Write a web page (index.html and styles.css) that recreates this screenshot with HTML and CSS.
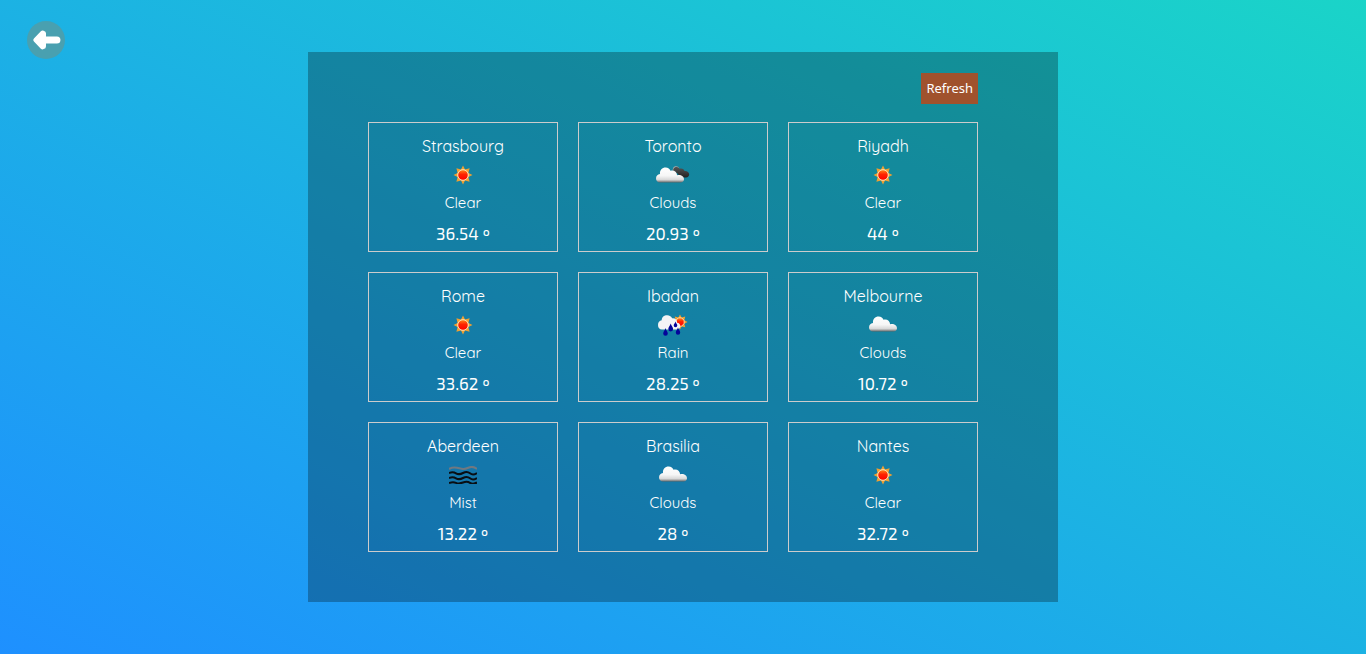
FILE: index.html
```
<!DOCTYPE html>
<html lang="en">
<head>
<meta charset="utf-8">
<meta name="viewport" content="width=device-width, initial-scale=1">
<title>World weather</title>
<link rel="stylesheet" href="styles.css">
</head>
<body>
<svg class="defs" aria-hidden="true">
  <defs>
    <linearGradient id="cloud-fill" x1="0" y1="0" x2="0" y2="1">
      <stop offset="0" stop-color="#fff"/><stop offset=".55" stop-color="#f6f6f6"/><stop offset=".82" stop-color="#d8d8d8"/><stop offset="1" stop-color="#666"/>
    </linearGradient>
    <linearGradient id="dark-fill" x1="0" y1="0" x2="0" y2="1">
      <stop offset="0" stop-color="#555"/><stop offset="1" stop-color="#222"/>
    </linearGradient>
    <linearGradient id="sun-fill" x1="0" y1="0" x2="0" y2="1">
      <stop offset="0" stop-color="#ff8a1c"/><stop offset=".45" stop-color="#f20"/><stop offset="1" stop-color="#f00"/>
    </linearGradient>
    <symbol id="sun" viewBox="0 0 20 20">
      <path fill="#f0a030" d="M10 .5l2 4 4.6-1.300-1.200 4.700 4.100 2.100-4.100 2.100 1.200 4.600-4.600-1.200-2 4-2-4-4.600 1.200 1.200-4.600L.5 10l4.100-2.100-1.200-4.700L8 4.500z"/>
      <circle cx="10" cy="10" r="5.300" fill="url(#sun-fill)" stroke="#ffe9bd" stroke-width="1"/>
    </symbol>
    <symbol id="cloud" viewBox="0 0 28 16">
      <path fill="url(#cloud-fill)" d="M4 15.500C1.500 15.500 0 13.800 0 11.500 0 9 1.500 7.300 4 7 3.600 3 6.200.5 9.600.5c2.600 0 4.200 1.300 4.900 3.300 3.500-1 6.300 1.200 6.600 4.400 3.600-.9 6.900 1 6.900 4 0 1.900-1.300 3.300-3.500 3.300z"/>
    </symbol>
  </defs>
  <symbol id="clouds" viewBox="0 0 34 17">
    <path fill="#aaa" d="M17 6C16 2 18 .3 20 .3c1.700 0 2.600.8 3 1.700l-1 4z"/>
    <path fill="url(#dark-fill)" d="M17.500 6C16.500 2.500 18.600 1 20.600 1c1.400 0 2.400.8 2.900 1.800 2.300-1 4.600.1 5 2.300 2.400-.3 4.700 1.100 4.700 3.200 0 2-1.300 3.200-3.200 3.200h-5L21 7z"/>
    <use href="#cloud" x="0" y="1" width="28" height="16"/>
  </symbol>
  <symbol id="rain" viewBox="0 0 30 22">
    <use href="#sun" x="14" y="0" width="16" height="16"/>
    <path fill="#f4f4f6" d="M4 15.500c-2.500 0-4-1.700-4-4.500s1.500-4.400 3.700-4.700C3.700 3 6 1.200 9.200 1.200c2.400 0 4.200 1.300 4.900 3.100 3.200-.4 5.200 1.800 5 4.400 2 .2 3.100 1.400 3.100 3.400 0 2.200-1.400 3.400-3.200 3.400z"/>
    <path fill="#04049a" d="M12.700 9.500c-.8 2.700-2.400 3.800-2.400 5.500a2.400 2.400 0 0 0 4.800 0c0-1.700-1.600-2.800-2.400-5.500zM7.500 14c-.7 2.500-2.300 3.700-2.300 5.400a2.300 2.300 0 0 0 4.600 0c0-1.700-1.600-2.900-2.300-5.400zM20 13.500c-.7 2.300-2.200 3.400-2.200 5a2.200 2.200 0 0 0 4.400 0c0-1.600-1.500-2.700-2.200-5zM17.500 7.500c-.5 2-1.800 2.700-1.800 4a1.800 1.800 0 0 0 3.600 0c0-1.300-1.300-2-1.800-4z"/>
  </symbol>
  <symbol id="mist" viewBox="0 0 28 18">
    <path fill="none" stroke="#707880" stroke-width="2" d="M0 3Q4 .8 8 1.800T14 3T20 1.500T28 3"/>
    <path fill="none" stroke="#090d12" stroke-width="2" d="M0 7q4-1.500 7 .3t7-.3 7 .3 7-.3M0 12q4-1.500 7 .3t7-.3 7 .3 7-.3M0 17q4-1.500 7-.2t7-.3 7 .3 7-.3"/>
  </symbol>
</svg>

<header class="topbar">
  <button class="back" type="button" aria-label="Back">
    <svg viewBox="0 0 40 40" aria-hidden="true"><path d="M7.300 18.300L14.600 10.800Q16 9.500 17.500 10.300Q20 11 20 13V16.200H31.500A3.700 3.700 0 0 1 31.500 23.600H20V26.500Q20 29 17.500 29.600Q16 30.300 14.600 29.200L7.300 21.700Q5.700 20 7.300 18.300z"/></svg>
  </button>
</header>

<main class="panel">
  <div class="actions"><button class="refresh" type="button">Refresh</button></div>
  <section class="grid">
    <article class="card"><h2 class="city">Strasbourg</h2><div class="icon"><svg class="sun"><use href="#sun"/></svg></div><p class="state">Clear</p><p class="temp">36.54 º</p></article>
    <article class="card"><h2 class="city">Toronto</h2><div class="icon"><svg class="clouds"><use href="#clouds"/></svg></div><p class="state">Clouds</p><p class="temp">20.93 º</p></article>
    <article class="card"><h2 class="city">Riyadh</h2><div class="icon"><svg class="sun"><use href="#sun"/></svg></div><p class="state">Clear</p><p class="temp">44 º</p></article>
    <article class="card"><h2 class="city">Rome</h2><div class="icon"><svg class="sun"><use href="#sun"/></svg></div><p class="state">Clear</p><p class="temp">33.62 º</p></article>
    <article class="card"><h2 class="city">Ibadan</h2><div class="icon"><svg class="rain"><use href="#rain"/></svg></div><p class="state">Rain</p><p class="temp">28.25 º</p></article>
    <article class="card"><h2 class="city">Melbourne</h2><div class="icon"><svg class="cloud"><use href="#cloud"/></svg></div><p class="state">Clouds</p><p class="temp">10.72 º</p></article>
    <article class="card"><h2 class="city">Aberdeen</h2><div class="icon"><svg class="mist"><use href="#mist"/></svg></div><p class="state">Mist</p><p class="temp">13.22 º</p></article>
    <article class="card"><h2 class="city">Brasilia</h2><div class="icon"><svg class="cloud"><use href="#cloud"/></svg></div><p class="state">Clouds</p><p class="temp">28 º</p></article>
    <article class="card"><h2 class="city">Nantes</h2><div class="icon"><svg class="sun"><use href="#sun"/></svg></div><p class="state">Clear</p><p class="temp">32.72 º</p></article>
  </section>
</main>
</body>
</html>
```

FILE: styles.css
```
* { box-sizing: border-box; }

body {
  margin: 0;
  min-height: 100vh;
  display: grid;
  align-items: center;
  justify-items: center;
  background: linear-gradient(to top right, #1e90ff, #1ad4c8);
  color: #fff;
  font-family: Quicksand, Lato, sans-serif;
}

.defs { position: absolute; width: 0; height: 0; }

.topbar { position: absolute; top: 21px; left: 27px; }

.back {
  display: block;
  width: 38px;
  height: 38px;
  padding: 0;
  border: 0;
  border-radius: 50%;
  background: #49a0b0;
  cursor: pointer;
}

.back svg { display: block; width: 100%; fill: #fff; }

.panel {
  width: 100%;
  max-width: 750px;
  padding: 21px 80px 50px 60px;
  background: rgba(0, 0, 0, 0.28);
}

.actions { display: flex; justify-content: flex-end; margin-bottom: 18px; }

.refresh {
  padding: 5px;
  border: 0;
  background: #a0522d;
  color: #fff;
  font: 13px/21px "Noto Sans", sans-serif;
  cursor: pointer;
}

.grid {
  display: grid;
  grid-template-columns: repeat(auto-fit, minmax(160px, 1fr));
  gap: 20px;
}

.card {
  padding: 11px 8px 6px;
  border: 1px solid #ccc;
  text-align: center;
}

.city { margin: 0; font-size: 16px; font-weight: 400; line-height: 24px; }

.icon { display: flex; align-items: center; justify-content: center; height: 33px; }

.sun { width: 20px; height: 20px; }
.clouds { width: 34px; height: 17px; }
.cloud { width: 28px; height: 16px; margin-bottom: 2px; }
.rain { width: 30px; height: 22px; }
.mist { width: 28px; height: 18px; }

.state { margin: 0; font-size: 15px; line-height: 24px; }

.temp { margin: 6px 0 0; font: 400 17px/24px "Exo 2", Exo, Lato, sans-serif; }
```
